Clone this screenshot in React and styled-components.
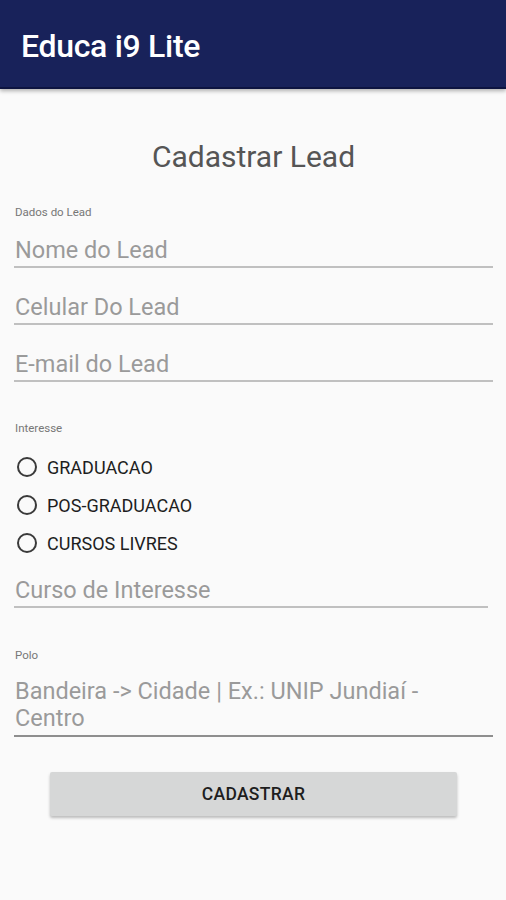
import styled, { createGlobalStyle } from 'styled-components';

const GlobalStyle = createGlobalStyle`
  html, body {
    margin: 0;
    padding: 0;
    background: #fafafa;
    font-family: Roboto, "Liberation Sans", sans-serif;
  }
`

const Screen = styled.div`
  width: 506px;
  min-height: 900px;
  background: #fafafa;
`

const AppBar = styled.header`
  height: 89px;
  background: #18225a;
  border-bottom: 2px solid #0d1440;
  box-shadow: 0 2px 4px rgba(0, 0, 0, 0.3);
  display: flex;
  align-items: center;
  padding-left: 21px;
  box-sizing: border-box;
`

const AppTitle = styled.h1`
  margin: 0;
  margin-top: 4px;
  color: #fff;
  font-size: 32px;
  font-weight: 500;
  letter-spacing: -0.3px;
`

const Form = styled.main`
  display: flex;
  flex-direction: column;
  padding: 0 13px 0 14px;
`

const PageTitle = styled.h2`
  margin: 50px 0 0;
  text-align: center;
  font-size: 30px;
  font-weight: 400;
  color: #555;
  line-height: 36px;
`

const SectionLabel = styled.div`
  font-size: 11.5px;
  color: #777;
  padding-left: 1px;
  margin-top: ${props => props.$top}px;
  line-height: 13px;
`

const Field = styled.div`
  margin-top: ${props => props.$top}px;
  margin-right: ${props => props.$right || 0}px;
  border-bottom: 2px solid ${props => props.$dark ? '#8e8e8e' : '#c0c0c0'};
  font-size: 23.5px;
  color: #9a9a9a;
  line-height: ${props => props.$lh || 30}px;
  padding: 0 0 ${props => props.$pad || 1}px 1px;
`

const RadioGroup = styled.div`
  display: flex;
  flex-direction: column;
  gap: 12px;
  margin-top: 19px;
  padding-left: 3px;
`

const RadioRow = styled.label`
  display: flex;
  align-items: center;
  gap: 10px;
  height: 26px;
  font-size: 18px;
  color: #1e1e1e;
`

const RadioCircle = styled.span`
  width: 16px;
  height: 16px;
  border: 2px solid #3a3a3a;
  border-radius: 50%;
`

const SubmitButton = styled.button`
  align-self: center;
  margin-top: 35px;
  width: 407px;
  height: 44px;
  border: none;
  border-radius: 2px;
  background: #d6d7d7;
  box-shadow: 0 2px 3px rgba(0, 0, 0, 0.25);
  font-family: Roboto, "Liberation Sans", sans-serif;
  font-size: 17.5px;
  font-weight: 500;
  color: #1e1e1e;
  letter-spacing: 0.3px;
`

const options = ['GRADUACAO', 'POS-GRADUACAO', 'CURSOS LIVRES']

export default function App() {
  return (
    <Screen>
      <GlobalStyle />
      <AppBar>
        <AppTitle>Educa i9 Lite</AppTitle>
      </AppBar>
      <Form>
        <PageTitle>Cadastrar Lead</PageTitle>
        <SectionLabel $top={31}>Dados do Lead</SectionLabel>
        <Field $top={16}>Nome do Lead</Field>
        <Field $top={24}>Celular Do Lead</Field>
        <Field $top={24}>E-mail do Lead</Field>
        <SectionLabel $top={40}>Interesse</SectionLabel>
        <RadioGroup>
          {options.map(o => (
            <RadioRow key={o}>
              <RadioCircle />
              {o}
            </RadioRow>
          ))}
        </RadioGroup>
        <Field $top={19} $right={5}>Curso de Interesse</Field>
        <SectionLabel $top={41}>Polo</SectionLabel>
        <Field $top={16} $lh={27} $pad={3} $dark>Bandeira -&gt; Cidade | Ex.: UNIP Jundiaí -<br />Centro</Field>
        <SubmitButton>CADASTRAR</SubmitButton>
      </Form>
    </Screen>
  )
}
